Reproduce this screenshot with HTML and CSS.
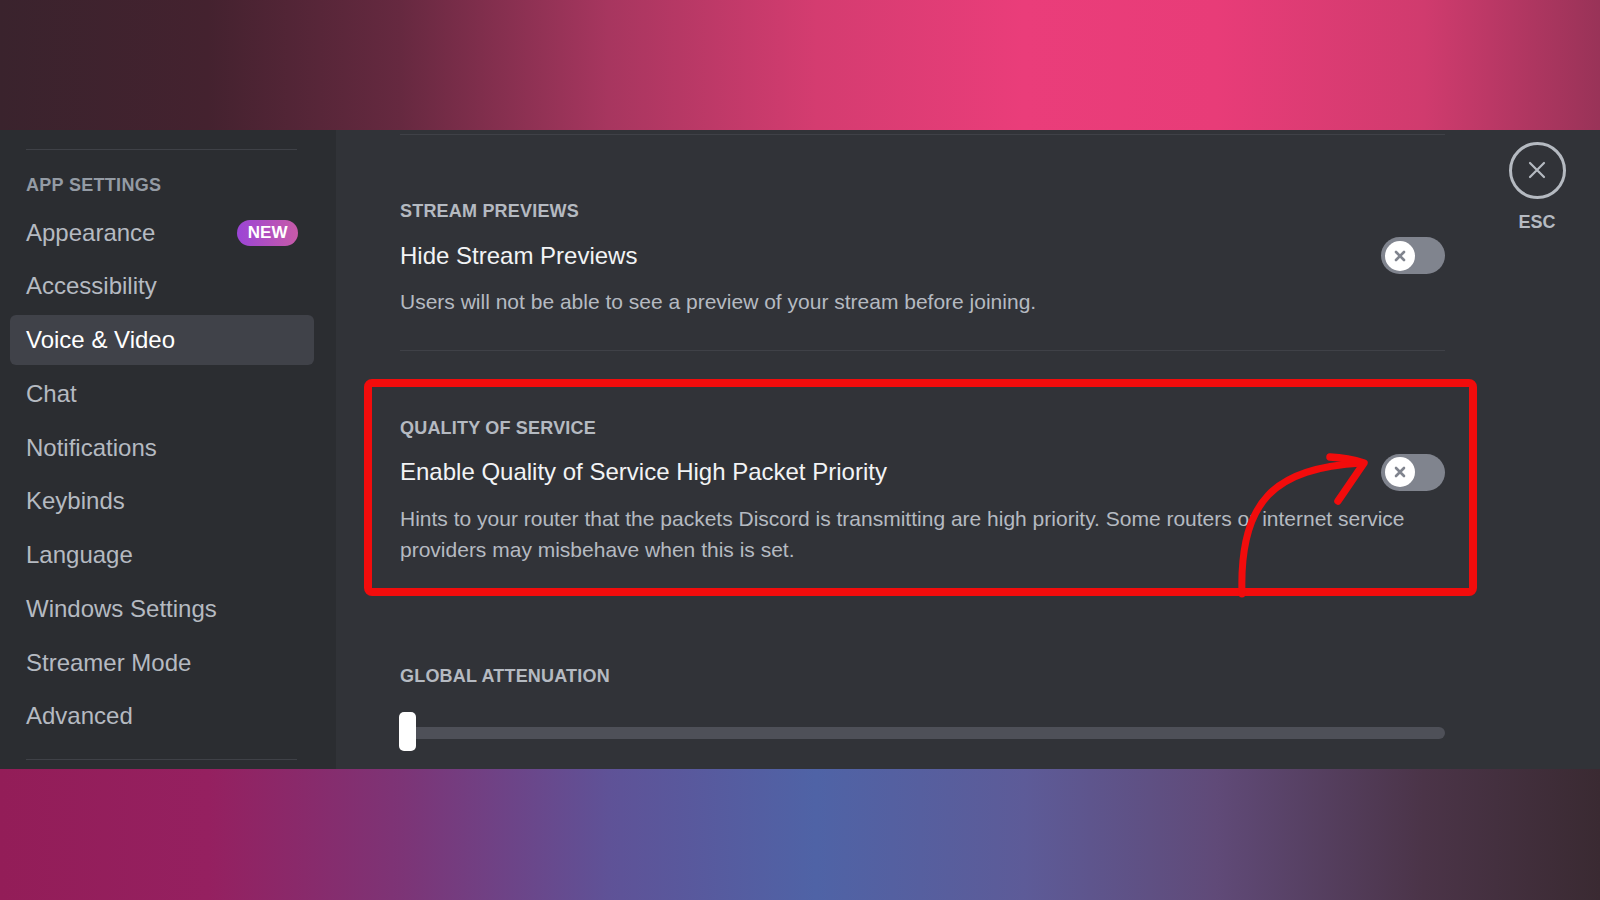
FILE: index.html
```html
<!DOCTYPE html>
<html lang="en">

<head>
    <meta charset="utf-8">
    <title>User Settings - Voice &amp; Video</title>
    <link rel="stylesheet" href="styles.css">
</head>

<body>
    <div class="top-band"></div>

    <div class="settings">
        <nav class="sidebar">
            <div class="side-rule"></div>
            <div class="side-head">App Settings</div>
            <a class="side-item">Appearance <span class="badge">NEW</span></a>
            <a class="side-item">Accessibility</a>
            <a class="side-item active">Voice &amp; Video</a>
            <a class="side-item">Chat</a>
            <a class="side-item">Notifications</a>
            <a class="side-item">Keybinds</a>
            <a class="side-item">Language</a>
            <a class="side-item">Windows Settings</a>
            <a class="side-item">Streamer Mode</a>
            <a class="side-item">Advanced</a>
            <div class="side-rule bottom"></div>
        </nav>

        <main class="content">
            <div class="content-col">
                <div class="rule"></div>

                <section class="setting stream">
                    <h3 class="setting-head">Stream Previews</h3>
                    <div class="setting-row">
                        <span class="setting-title">Hide Stream Previews</span>
                        <div class="toggle">
                            <div class="knob">
                                <svg width="14" height="14" viewBox="0 0 14 14"><path d="M3 3L11 11M11 3L3 11" stroke="#80848e" stroke-width="2.6" stroke-linecap="round"/></svg>
                            </div>
                        </div>
                    </div>
                    <p class="setting-desc">Users will not be able to see a preview of your stream before joining.</p>
                </section>

                <div class="rule mid"></div>

                <section class="setting marked">
                    <h3 class="setting-head">Quality of Service</h3>
                    <div class="setting-row">
                        <span class="setting-title">Enable Quality of Service High Packet Priority</span>
                        <div class="toggle">
                            <div class="knob">
                                <svg width="14" height="14" viewBox="0 0 14 14"><path d="M3 3L11 11M11 3L3 11" stroke="#80848e" stroke-width="2.6" stroke-linecap="round"/></svg>
                            </div>
                        </div>
                    </div>
                    <p class="setting-desc">Hints to your router that the packets Discord is transmitting are high priority. Some routers or internet service<br>providers may misbehave when this is set.</p>
                    <!-- annotation arrow -->
                    <svg class="arrow" width="170" height="180" viewBox="0 0 170 180">
                        <path d="M22 158C19 64 55 32 142 27" fill="none" stroke="#f20c0c" stroke-width="7" stroke-linecap="round"/>
                        <path d="M110 21Q128 22 144 27L118 65" fill="none" stroke="#f20c0c" stroke-width="7.5" stroke-linecap="round" stroke-linejoin="round"/>
                    </svg>
                </section>

                <section class="setting attenuation">
                    <h3 class="setting-head">Global Attenuation</h3>
                    <div class="slider">
                        <div class="slider-track"></div>
                        <div class="slider-grab"></div>
                    </div>
                </section>
            </div>

            <div class="tools">
                <button class="close">
                    <svg width="22" height="22" viewBox="0 0 22 22"><path d="M4 4L18 18M18 4L4 18" stroke="#b5bac1" stroke-width="2.2" stroke-linecap="round"/></svg>
                </button>
                <div class="esc">ESC</div>
            </div>
        </main>
    </div>

    <div class="bottom-band"></div>
</body>

</html>
```

FILE: styles.css
```css
* {
    margin: 0;
    padding: 0;
    box-sizing: border-box;
}

body {
    font-family: "Liberation Sans", Arial, sans-serif;
    background-color: #313338;
    overflow: hidden;
}

.top-band {
    height: 130px;
    background: linear-gradient(90deg, #3a232d 0%, #44222f 13%, #662940 25%, #a7365f 38%, #d43c70 51%, #ea3d7a 64%, #e83c78 76%, #d03b6e 89%, #993358 100%);
}

.bottom-band {
    height: 131px;
    background: linear-gradient(90deg, #931d58 0%, #952060 13%, #7d3476 25%, #5f5297 38%, #4f63a6 51%, #5d5b98 64%, #604a78 76%, #4b3448 89%, #3a2a32 100%);
}

.settings {
    display: flex;
    height: 639px;
}

/* sidebar */

.sidebar {
    width: 336px;
    background-color: #2b2d31;
    padding: 19px 22px 0 10px;
    overflow: hidden;
}

.side-rule {
    height: 1px;
    background-color: #3f4147;
    margin: 0 17px 0 16px;
}

.side-rule.bottom {
    margin-top: 18px;
}

.side-head {
    margin-top: 23px;
    margin-bottom: 10.7px;
    padding-left: 16px;
    font-size: 18px;
    line-height: 24px;
    font-weight: bold;
    letter-spacing: 0.3px;
    text-transform: uppercase;
    color: #949ba4;
}

.side-item {
    display: flex;
    align-items: center;
    justify-content: space-between;
    height: 50px;
    padding: 0 16px;
    margin-bottom: 3.75px;
    font-size: 24px;
    color: #b5bac1;
    border-radius: 6px;
}

.side-item.active {
    background-color: #404249;
    color: #ffffff;
}

.badge {
    height: 26px;
    padding: 0 10.5px;
    border-radius: 13px;
    background: linear-gradient(90deg, #9b45d6, #c75aa8);
    color: #ffffff;
    font-size: 17px;
    line-height: 26px;
    font-weight: bold;
}

/* content */

.content {
    flex: 1;
    display: flex;
    padding-left: 64px;
    background-color: #313338;
    overflow: hidden;
}

.content-col {
    width: 1045px;
    padding-top: 4px;
}

.rule {
    height: 1px;
    background-color: #3f4147;
}

.rule.mid {
    margin-top: 32.5px;
}

.setting-head {
    font-size: 18px;
    line-height: 24px;
    font-weight: bold;
    letter-spacing: 0.2px;
    text-transform: uppercase;
    color: #b5bac1;
}

.setting-row {
    display: flex;
    align-items: center;
    justify-content: space-between;
    margin-top: 14px;
}

.setting-title {
    font-size: 24px;
    line-height: 30px;
    color: #f2f3f5;
}

.toggle {
    display: flex;
    align-items: center;
    width: 64px;
    height: 37px;
    padding: 0 4px;
    border-radius: 19px;
    background-color: #80848e;
}

.knob {
    display: flex;
    align-items: center;
    justify-content: center;
    width: 30px;
    height: 30px;
    border-radius: 50%;
    background-color: #ffffff;
}

.setting-desc {
    margin-top: 12px;
    font-size: 21px;
    line-height: 31.5px;
    color: #b5bac1;
}

.stream {
    margin-top: 64px;
}

.marked {
    position: relative;
    margin-top: 65px;
}

.marked .setting-row {
    margin-top: 13.5px;
}

/* red highlight frame */
.marked::before {
    content: "";
    position: absolute;
    left: -36.5px;
    right: -31.5px;
    top: -37.5px;
    bottom: -30.2px;
    border: 8.5px solid #f20c0c;
    border-radius: 8px;
}

.arrow {
    position: absolute;
    left: 820px;
    top: 20px;
    overflow: visible;
}

.attenuation {
    margin-top: 98.5px;
}

.slider {
    position: relative;
    display: flex;
    align-items: center;
    height: 39px;
    margin-top: 24px;
}

.slider-track {
    flex: 1;
    height: 12.5px;
    margin-top: 3px;
    border-radius: 6px;
    background-color: #4e5058;
}

.slider-grab {
    position: absolute;
    left: -1px;
    top: 0;
    width: 17px;
    height: 39px;
    border-radius: 5px;
    background-color: #ffffff;
}

/* close button */

.tools {
    display: flex;
    flex-direction: column;
    align-items: center;
    width: 57px;
    margin-left: 63.5px;
    padding-top: 11.7px;
}

.close {
    display: flex;
    align-items: center;
    justify-content: center;
    width: 57px;
    height: 57px;
    border: 3px solid #b5bac1;
    border-radius: 50%;
    background: none;
}

.esc {
    margin-top: 13px;
    font-size: 18px;
    line-height: 20px;
    font-weight: bold;
    color: #b5bac1;
}
```
